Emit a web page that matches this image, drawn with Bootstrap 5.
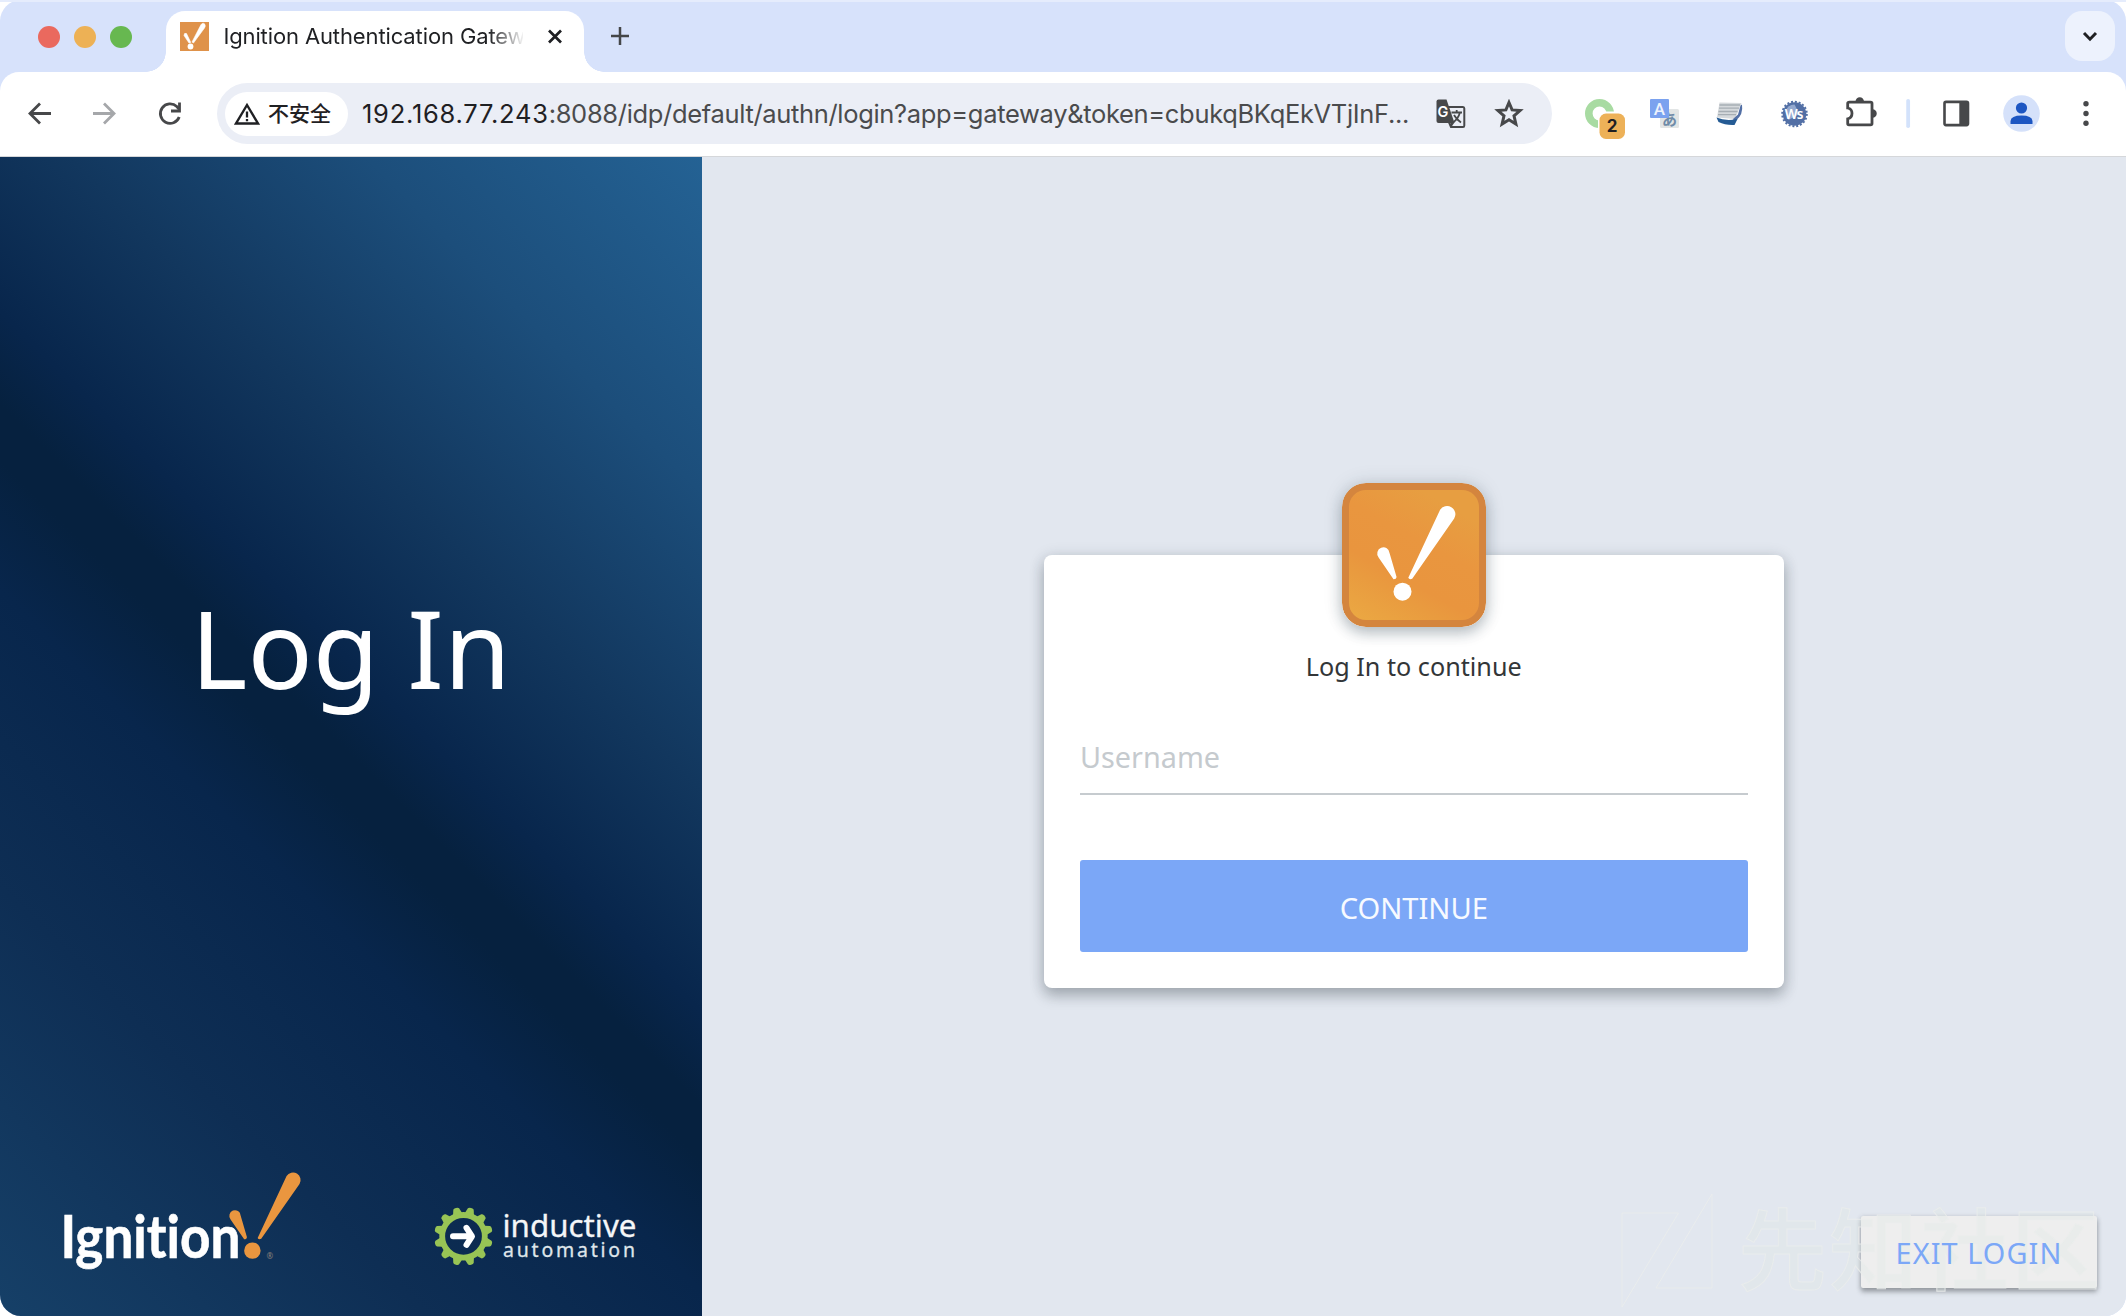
<!DOCTYPE html>
<html lang="en">
<head>
<meta charset="utf-8">
<title>Ignition Authentication Gateway</title>
<meta name="viewport" content="width=device-width, initial-scale=1">
<link href="https://cdn.jsdelivr.net/npm/bootstrap@5.3.0/dist/css/bootstrap.min.css" rel="stylesheet">
<style>
  body { width: 2126px; height: 1316px; background: #fff; overflow: hidden; font-family: "Noto Sans", "Noto Sans CJK SC", sans-serif; }
  .app-window { height: 1316px; border-radius: 21px; background: #d7e2fb; }
  svg { display: block; flex: none; }

  /* browser frame */
  .chrome-ui { font-family: Inter, "Noto Sans CJK SC", sans-serif; }
  .tab-strip { height: 72px; padding: 11px 11px 0 38px; box-shadow: inset 0 2px 0 #e5ecfc; }
  .traffic-light { width: 22px; height: 22px; margin-top: 15px; margin-right: 14.2px; border-radius: 50%; }
  .active-tab { width: 418px; height: 61px; margin-left: 34px; padding: 11px 20px 0 14px; background: #fff; border-radius: 19px 19px 0 0; }
  .active-tab::before, .active-tab::after { content: ""; position: absolute; bottom: 0; width: 20px; height: 20px; }
  .active-tab::before { left: -20px; background: radial-gradient(circle at 0 0, transparent 19.5px, #fff 20px); }
  .active-tab::after { right: -20px; background: radial-gradient(circle at 100% 0, transparent 19.5px, #fff 20px); }
  .tab-title { width: 300px; margin-left: 14px; font-size: 22px; line-height: 28px; letter-spacing: -.12px; color: #1f2023; white-space: nowrap; overflow: hidden;
    -webkit-mask-image: linear-gradient(90deg, #000 266px, transparent 302px); mask-image: linear-gradient(90deg, #000 266px, transparent 302px); }
  .tab-search { width: 50px; height: 50px; border-radius: 17px; background: #edf2fd; }
  .tool-bar { height: 85px; padding: 11px 0 12px 8px; background: #fff; border-radius: 19px 19px 0 0; border-bottom: 1px solid #d5d7da; }
  .omnibox { width: 1335px; height: 61px; margin-left: 13px; padding: 0 28px 0 8px; border-radius: 31px; background: #ebeef6; }
  .site-chip { width: 123px; height: 44px; padding-left: 9px; border-radius: 22px; background: #fff; font-size: 21px; font-weight: 500; color: #1f2023; }
  .url-text { width: 1052px; margin-left: 14px; padding-top: 1px; font-size: 25.5px; letter-spacing: -.33px; color: #4a4b4d; white-space: nowrap; }
  .url-text b { font-weight: 400; letter-spacing: .75px; color: #1f2023; }
  .tool-icons { margin-left: 14.5px; gap: .25px; }

  /* page */
  .side-panel { width: 701.5px; border-bottom-left-radius: 21px;
    background: linear-gradient(225deg, #246294 0%, #1c4e7b 18%, #12375e 34%, #08264c 46%, #06213f 51%, #06213f 54%, #08264c 61%, #0e2e54 77%, #164068 100%); }
  .side-title { height: 1033px; padding-top: 417px; font-size: 108px; line-height: 147px; color: #fff; }
  .brand-row { height: 126px; font-variant-ligatures: none; }
  .main-area { background: #e2e7ef; border-bottom-right-radius: 21px; padding: 397.5px 342.5px 0 342.5px; }
  .login-card { height: 433px; padding: 0 36px; border: 0; border-radius: 8px; box-shadow: 0 8px 14px rgba(40,50,60,.27), 0 2px 16px rgba(40,50,60,.16); }
  .app-logo { width: 144px; height: 144px; margin-top: -72px; border-radius: 24px; box-shadow: 0 6px 14px rgba(30,50,70,.28), 0 0 20px rgba(40,60,60,.13); }
  .login-hint { margin-top: 22px; font-size: 25.2px; line-height: 34px; color: #333638; }
  .user-field { height: 78px; margin-top: 34px; padding: 5px 0 2px; border: 0; border-bottom: 2px solid #c6cbcf; border-radius: 0; font-size: 28.8px; color: #333; background: none; }
  .user-field::placeholder { color: #c5cace; opacity: 1; }
  .btn-continue { height: 92px; margin-top: 65px; padding: 7px 0 0; border: 0; border-radius: 3px; background: #7ba7f7; color: #f7faff; font-size: 29.1px; }
  .exit-wrap { right: 29px; bottom: 28.5px; }
  .btn-exit { width: 236px; height: 72px; padding: 2px 0 0; border: 0; border-radius: 2px; background: #eee; color: #7ba7f7; font-size: 28.8px; letter-spacing: 1.1px; box-shadow: 0 4px 5px rgba(60,65,70,.38), 0 1px 5px rgba(60,65,70,.22); }
  .page-mark { right: 0; bottom: 0; pointer-events: none; z-index: 1; }
  .exit-label { z-index: 2; }
</style>
</head>
<body>
<svg width="0" height="0" class="position-absolute">
  <defs>
    <g id="spark">
      <circle cx="60.5" cy="108.7" r="9"/>
      <path d="M66.300 94.800 Q67.200 96.800 70.200 95.800 L112.200 35.500 A8.200 8.200 0 1 0 98 27 Z"/>
      <path d="M51.500 96.200 Q54.500 96.200 54.500 93.700 L47.600 70.200 A6.200 6.200 0 1 0 36.600 74.500 Z"/>
    </g>
  </defs>
</svg>

<div class="app-window d-flex flex-column">
  <header class="chrome-ui">
    <div class="tab-strip d-flex align-items-start">
      <span class="traffic-light" style="background:#ea695e"></span>
      <span class="traffic-light" style="background:#edb155"></span>
      <span class="traffic-light me-0" style="background:#67b850"></span>
      <div class="active-tab position-relative d-flex align-items-start">
        <svg width="29" height="29" viewBox="0 0 29 29"><rect width="29" height="29" fill="#df924a"/><circle cx="10.500" cy="24.500" r="2.900" fill="#fff"/><path d="M12 20 20 4.500Q22-.2 24.500 1.800 26 4 24.500 6L13.500 21ZM9 21 4 13.500Q4 10.500 6.500 11.500L10.800 20.500Z" fill="#fff" stroke="#fff" stroke-width=".6"/></svg>
        <div class="tab-title">Ignition Authentication Gateway</div>
        <svg class="ms-auto" width="18" height="28" viewBox="-9 -14 18 28"><path d="M-6-5.500 6 6.500M6-5.500-6 6.500" stroke="#1f2023" stroke-width="2.700"/></svg>
      </div>
      <svg width="72" height="50" viewBox="-36 -25 72 50"><path d="M-9 0H9M0-9V9" stroke="#444648" stroke-width="2.500"/></svg>
      <div class="tab-search ms-auto d-flex align-items-center justify-content-center">
        <svg width="20" height="20" viewBox="-10 -10 20 20"><path d="M-6-3 0 3.200 6-3" fill="none" stroke="#1f2023" stroke-width="3"/></svg>
      </div>
    </div>

    <div class="tool-bar d-flex align-items-center">
      <svg width="64" height="61" viewBox="-32 -30.5 64 61"><path d="M11 0H-9M0-10-10 0 0 10" fill="none" stroke="#47484a" stroke-width="2.800"/></svg>
      <svg width="64" height="61" viewBox="-32 -30.5 64 61"><path d="M-11 0H9M0-10 10 0 0 10" fill="none" stroke="#a5a7aa" stroke-width="2.800"/></svg>
      <svg width="68" height="61" viewBox="-34 -30.5 68 61"><path d="M9.200 3.500A9.700 9.700 0 1 1 6.800-6.900L9-4.500" fill="none" stroke="#47484a" stroke-width="2.800"/><path d="M9.500-11V-2.500H1" fill="none" stroke="#47484a" stroke-width="2.800"/></svg>
      <div class="omnibox d-flex align-items-center">
        <div class="site-chip d-flex align-items-center">
          <svg width="26" height="24" viewBox="0 0 26 24"><path d="M13 3 24 21.500H2Z" fill="none" stroke="#1f2023" stroke-width="2.400"/><path d="M13 9.500V15.500M13 17V19.300" stroke="#1f2023" stroke-width="2.300"/></svg>
          <span class="ms-2">不安全</span>
        </div>
        <div class="url-text"><b>192.168.77.243</b>:8088/idp/default/authn/login?app=gateway&amp;token=cbukqBKqEkVTjInF...</div>
        <svg class="ms-auto" width="30" height="30" viewBox="0 0 30 30">
          <path d="M12 8H27Q28.300 8 28.300 9.500V26.500Q28.300 28 27 28H15L12 21" fill="none" stroke="#47484a" stroke-width="2"/>
          <path d="M2.500.500H10.500L18.500 24H2.500Q.500 24 .500 22V2.500Q.500.500 2.500.500Z" fill="#47484a"/><path d="M14.500 23.500H18.500L15 28.500Z" fill="#47484a"/>
          <text x="1.600" y="18.300" font-size="14.500" font-weight="600" fill="#fff">G</text>
          <path d="M15.500 13.500H26M20.700 11V13.500M24 13.500Q22 20 17.500 23M18 16Q20.500 20.500 25 23.500" fill="none" stroke="#47484a" stroke-width="1.800"/>
        </svg>
        <svg style="margin-left:28px" width="30" height="30" viewBox="-15 -15 30 30"><path d="M0-11.500 3.100-4.100 11.100-3.500 5 1.900 6.900 10-0 5.700-6.900 10-5 1.900-11.100-3.500-3.100-4.100Z" fill="none" stroke="#47484a" stroke-width="3"/></svg>
      </div>
      <div class="tool-icons d-flex align-items-center">
        <svg width="65" height="61" viewBox="-32.5 -30.5 65 61"><circle r="10.700" fill="none" stroke="#a8dba2" stroke-width="7.600"/><rect x="-1.500" y="-2" width="30" height="30" rx="8" fill="#fff"/><rect x="0" y="0" width="25.500" height="25.500" rx="6.500" fill="#edb158"/><text x="12.600" y="18.700" text-anchor="middle" font-size="17" font-weight="700" fill="#1f2023">2</text></svg>
        <svg width="65" height="61" viewBox="-32.500 -30.5 65 61"><rect x="-4.500" y="-4.500" width="19" height="19" rx="1.500" fill="#e2e5e5"/><text x="5" y="11" text-anchor="middle" font-size="15" font-weight="700" fill="#6f8ba8" font-family="Noto Sans CJK JP">あ</text><rect x="-14.500" y="-14.500" width="19" height="19" rx="1" fill="#7ba2ef"/><text x="-5" y="1" text-anchor="middle" font-size="17" font-weight="500" fill="#eef3fd" font-family="Roboto">A</text></svg>
        <svg width="65" height="61" viewBox="-32.5 -30.5 65 61"><path d="M-10-11 12-10.500 5.500 5.500-12.500 4Z" fill="#d5d9dc"/><path d="M-10-8.500H10.500M-10.500-5.300H9.500M-11-2H8M-11.500 1.200H6.500" stroke="#a7aeb4" stroke-width="1.300"/><path d="M12.500-9Q14 1 6.500 7L3 6 8.500 1 11-8Z" fill="#526fa5"/><path d="M-13 4Q-4 8 8 5.500L5 11.500Q-4 12-11 8.500Z" fill="#245b94"/></svg>
        <svg width="65" height="61" viewBox="-32.500 -31 65 61"><circle r="11.800" fill="#526fa5"/><circle r="12.300" fill="none" stroke="#526fa5" stroke-width="2" stroke-dasharray="2 1.864"/><path d="M-9-3A10 10 0 0 1 0-9.500L5 0-6 6Z" fill="#94a9cf"/><text x="-9.800" y="5" font-size="13.500" font-weight="600" fill="#fff" font-family="Noto Sans" letter-spacing="-.8">Ws</text></svg>
        <svg width="65" height="61" viewBox="-33 -30.5 65 61"><path d="M-11.500-11.300H9.500Q11-11.300 11-10V10Q11 11.400 9.500 11.400H-12Q-13.300 11.400-13.300 10V5.300Q-9 4.500-9-.2-9-4.600-13.300-5.500V-10Q-13.300-11.300-11.500-11.300Z" fill="none" stroke="#47484a" stroke-width="2.800"/><path d="M-5.500-12A4.200 4.200 0 0 1 3-12ZM11.500-4.200A4.200 4.200 0 0 1 11.500 4.300Z" fill="#47484a"/></svg>
        <svg width="30.500" height="61" viewBox="-15.250 -30.5 30.500 61"><rect x="-2" y="-14.500" width="3.800" height="29" rx="1.800" fill="#d3e2fb"/></svg>
        <svg width="65" height="61" viewBox="-32.5 -30.5 65 61"><rect x="-12" y="-11.600" width="23.500" height="23.200" rx="1.500" fill="#fff" stroke="#47484a" stroke-width="2.600"/><path d="M2.800-12H11V12H2.800Z" fill="#47484a"/></svg>
        <svg width="65" height="61" viewBox="-32.5 -30.5 65 61"><circle r="18.300" fill="#d5e1fa"/><circle cy="-5.500" r="5.600" fill="#1d56c2"/><path d="M-11 10.500V7.500Q-10.500 2 0 2T11 7.500V10.500Z" fill="#1d56c2"/></svg>
        <svg width="65" height="61" viewBox="-32 -30.5 65 61"><g fill="#47484a"><circle cy="-9.800" r="2.700"/><circle r="2.700"/><circle cy="9.800" r="2.700"/></g></svg>
      </div>
    </div>
  </header>

  <main class="d-flex flex-grow-1">
    <section class="side-panel d-flex flex-column flex-shrink-0">
      <div class="side-title text-center">Log In</div>
      <svg class="brand-row" width="701" height="126" viewBox="0 1189.300 701 126" overflow="visible">
        <text x="60.500" y="1257.300" font-family="Lato" font-weight="700" font-size="58.500" fill="#fff" stroke="#fff" stroke-width=".6" textLength="180" lengthAdjust="spacingAndGlyphs">Ignition</text>
        <use href="#spark" fill="#ea963f" transform="translate(197.200 1150.800) scale(.912)"/>
        <text x="266.500" y="1258" font-size="8" fill="#8a8178">®</text>
        <g transform="translate(463.500 1235.600)">
          <circle r="21.300" fill="none" stroke="#98c455" stroke-width="5.800"/>
          <g id="teeth" fill="#98c455"></g>
          <path d="M-10.500 0H6M3-8.500 8.500 0 3 8.500" fill="none" stroke="#fff" stroke-width="6" stroke-linecap="round" stroke-linejoin="round"/>
        </g>
        <text x="502.500" y="1236.300" font-family="Noto Sans" font-size="31" fill="#f4f6f8" textLength="134" lengthAdjust="spacingAndGlyphs" stroke="#f4f6f8" stroke-width=".3">inductive</text>
        <text x="503" y="1256.300" font-family="Noto Sans" font-size="19.500" fill="#dfe5ea" stroke="#dfe5ea" stroke-width=".3" textLength="132">automation</text>
      </svg>
    </section>

    <section class="main-area flex-grow-1 position-relative">
      <div class="card login-card">
        <svg class="app-logo align-self-center" viewBox="0 0 144 144">
          <defs><linearGradient id="amber" x1="0" y1="1" x2=".55" y2="0"><stop offset="0" stop-color="#eba943"/><stop offset=".3" stop-color="#e99b3f"/><stop offset=".42" stop-color="#e9953e"/><stop offset=".7" stop-color="#e9963f"/><stop offset="1" stop-color="#e79e41"/></linearGradient></defs>
          <rect width="144" height="144" rx="24" fill="#d4853e"/><rect x="7" y="7" width="130" height="130" rx="17" fill="url(#amber)"/>
          <use href="#spark" fill="#fff"/>
        </svg>
        <div class="login-hint text-center">Log In to continue</div>
        <input class="form-control user-field shadow-none" type="text" placeholder="Username">
        <button class="btn btn-continue w-100" type="button">CONTINUE</button>
      </div>
      <div class="exit-wrap position-absolute">
        <button class="btn btn-exit" type="button"><span class="exit-label position-relative">EXIT LOGIN</span></button>
      </div>
      <svg class="page-mark position-absolute" width="526" height="136" viewBox="1600 1180 526 136">
        <g fill="#e0e8e5" fill-opacity=".35" stroke="#ebedec" stroke-opacity=".8">
          <path d="M1622 1213H1678.500L1622 1307ZM1712 1194V1288H1656Z" fill="none"/>
          <text x="1738" y="1283" font-family="Noto Sans CJK SC" font-weight="500" font-size="89" textLength="362">先知社区</text>
        </g>
      </svg>
    </section>
  </main>
</div>
<script src="https://cdn.jsdelivr.net/npm/bootstrap@5.3.0/dist/js/bootstrap.bundle.min.js"></script>
<script>
  // twelve gear teeth, evenly spaced and offset by half a step
  document.getElementById('teeth').innerHTML = Array.from({ length: 12 }, (_, i) =>
    `<path transform="rotate(${15 + i * 30})" d="M-4.800-22.500-3-28.200Q-2.500-29.400 0-29.400T3-28.200L4.800-22.500Z"/>`).join('');
</script>
</body>
</html>
